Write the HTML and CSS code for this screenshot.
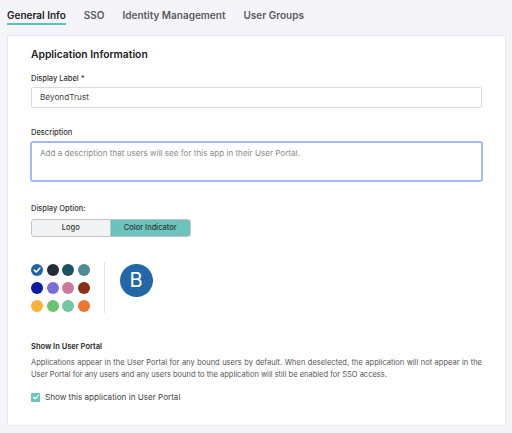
FILE: index.html
```html
<!DOCTYPE html>
<html lang="en">
<head>
    <meta charset="UTF-8">
    <meta name="viewport" content="width=device-width, initial-scale=1.0">
    <title>Application Settings</title>
    <link rel="stylesheet" href="styles.css">
</head>
<body>
    <div class="tabs">
        <div class="tab active">General Info</div>
        <div class="tab">SSO</div>
        <div class="tab">Identity Management</div>
        <div class="tab">User Groups</div>
    </div>

    <div class="card">
        <div class="section-title">Application Information</div>

        <div class="field-label">Display Label *</div>
        <div class="input">BeyondTrust</div>

        <div class="field-label desc-label">Description</div>
        <div class="textarea">Add a description that users will see for this app in their User Portal.</div>

        <div class="field-label option-label">Display Option:</div>
        <div class="toggle">
            <div class="toggle-item">Logo</div>
            <div class="toggle-item selected">Color Indicator</div>
        </div>

        <div class="colors">
            <div class="swatches">
                <div class="swatch checked" style="background:#1f64a3">
                    <svg width="8" height="8" viewBox="0 0 8 8"><path d="M1.3 4.2 L3.2 6 L6.8 2.2" fill="none" stroke="#fff" stroke-width="1.6" stroke-linecap="round" stroke-linejoin="round"/></svg>
                </div>
                <div class="swatch" style="background:#222d3a"></div>
                <div class="swatch" style="background:#1d5263"></div>
                <div class="swatch" style="background:#4e8a97"></div>
                <div class="swatch" style="background:#0b1ca0"></div>
                <div class="swatch" style="background:#7a6ed6"></div>
                <div class="swatch" style="background:#cc7a9c"></div>
                <div class="swatch" style="background:#8c2f16"></div>
                <div class="swatch" style="background:#f6b33b"></div>
                <div class="swatch" style="background:#6cc270"></div>
                <div class="swatch" style="background:#72c6a4"></div>
                <div class="swatch" style="background:#ef7430"></div>
            </div>
            <div class="divider"></div>
            <div class="preview">B</div>
        </div>

        <div class="portal-title">Show In User Portal</div>
        <p class="portal-text">Applications appear in the User Portal for any bound users by default. When deselected, the application will not appear in the User Portal for any users and any users bound to the application will still be enabled for SSO access.</p>

        <label class="check-row">
            <span class="checkbox">
                <svg width="8" height="8" viewBox="0 0 8 8"><path d="M1.5 4.2 L3.2 5.8 L6.5 2.3" fill="none" stroke="#fff" stroke-width="1.2" stroke-linecap="round" stroke-linejoin="round"/></svg>
            </span>
            Show this application in User Portal
        </label>
    </div>
</body>
</html>
```

FILE: styles.css
```css
body {
    margin: 0;
    background-color: #f5f5f9;
    font-family: Inter, 'Noto Sans', sans-serif;
    color: #333;
}

.tabs {
    display: flex;
    gap: 18px;
    padding-left: 7px;
}

.tab {
    font-size: 10px;
    font-weight: 600;
    color: #5a5a62;
    padding-top: 9px;
    line-height: 12px;
    padding-bottom: 2px;
    border-bottom: 2px solid transparent;
}

.tab.active {
    color: #222;
    border-bottom-color: #5cbfb8;
}

.card {
    margin: 10px 6px 0 7px;
    background: white;
    border: 1px solid #e8e8ee;
    padding: 11px 23px 22px 23px;
    height: 391px;
    box-sizing: border-box;
}

.section-title {
    font-size: 10.3px;
    font-weight: 600;
    color: #222;
    line-height: 14px;
    margin-bottom: 13px;
}

.field-label {
    font-size: 7.5px;
    font-weight: 500;
    color: #333;
    line-height: 10px;
    margin-bottom: 3px;
}

.input {
    height: 21px;
    box-sizing: border-box;
    border: 1px solid #dadade;
    border-radius: 2px;
    font-size: 8.2px;
    color: #444;
    line-height: 19px;
    padding-left: 8px;
}

.desc-label {
    margin-top: 20px;
}

.textarea {
    height: 41px;
    box-sizing: border-box;
    margin: 0 -1px;
    border: 2px solid #a2bbf3;
    border-radius: 3px;
    font-size: 8.1px;
    color: #8a8a8e;
    padding: 5px 8px;
    line-height: 11px;
}

.option-label {
    margin-top: 22px;
    margin-bottom: 5px;
}

.toggle {
    display: flex;
    width: 160px;
    height: 18px;
    border: 1px solid #c4c4c8;
    border-radius: 3px;
    box-sizing: border-box;
    overflow: hidden;
}

.toggle-item {
    flex: 79;
    background: #f2f3f5;
    font-size: 7.5px;
    font-weight: 500;
    color: #333;
    text-align: center;
    line-height: 16px;
}

.toggle-item.selected {
    flex: 81;
    background: #6ac4bd;
    border-left: 1px solid #c4c4c8;
}

.colors {
    display: flex;
    align-items: flex-start;
    margin-top: 25px;
    height: 51px;
}

.swatches {
    display: grid;
    grid-template-columns: repeat(4, 12px);
    column-gap: 3.5px;
    row-gap: 6px;
    padding-top: 2px;
}

.swatch {
    width: 12px;
    height: 12px;
    border-radius: 50%;
    display: flex;
    align-items: center;
    justify-content: center;
}

.divider {
    width: 1px;
    height: 51px;
    background: #e4e4e8;
    margin-left: 14px;
}

.preview {
    width: 33px;
    height: 33px;
    border-radius: 50%;
    background: #2467a7;
    color: white;
    font-size: 20px;
    line-height: 33px;
    text-align: center;
    margin-left: 15px;
    margin-top: 2px;
}

.portal-title {
    margin-top: 29px;
    font-size: 7.5px;
    font-weight: 600;
    color: #222;
    line-height: 10px;
}

.portal-text {
    margin: 5px 0 0;
    font-size: 7.5px;
    color: #555;
    line-height: 11.5px;
    text-align: justify;
}

.check-row {
    display: flex;
    align-items: center;
    gap: 5px;
    margin-top: 12px;
    font-size: 8.1px;
    color: #444;
}

.checkbox {
    width: 9px;
    height: 9px;
    border-radius: 1px;
    background: #6ac4bd;
    display: flex;
    align-items: center;
    justify-content: center;
}
```
